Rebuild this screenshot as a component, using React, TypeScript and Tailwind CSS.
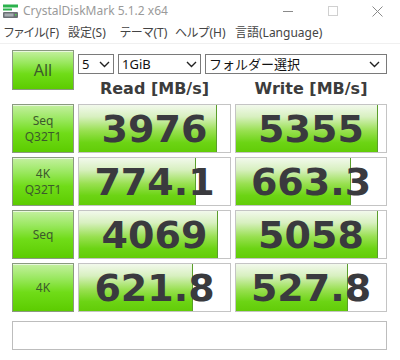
import React from "react";

const rows = [
  { l1: "Seq", l2: "Q32T1", r: "3976", rw: 138, w: "5355", ww: 142 },
  { l1: "4K", l2: "Q32T1", r: "774.1", rw: 117, w: "663.3", ww: 115 },
  { l1: "Seq", l2: "", r: "4069", rw: 139, w: "5058", ww: 142 },
  { l1: "4K", l2: "", r: "621.8", rw: 114, w: "527.8", ww: 112 },
];

function Chevron() {
  return (
    <svg width="11" height="7" viewBox="0 0 11 7" className="shrink-0">
      <path d="M1 1 L5.5 5.5 L10 1" fill="none" stroke="#222" strokeWidth="1.4" />
    </svg>
  );
}

function ValueBox({ text, fill, width }: { text: string; fill: number; width: string }) {
  return (
    <div className={`relative h-full ${width} border border-[#c4c4c4] bg-white`}>
      <div
        className="absolute left-0 top-0 bottom-0 border-r border-[#5a9e2a] bg-[linear-gradient(to_bottom,#f2f9ec_0%,#d8f0c0_25%,#98e050_55%,#6cd414_80%,#62cc08_100%)]"
        style={{ width: fill }}
      />
      <div className="relative flex h-full items-center justify-center font-['DejaVu_Sans',sans-serif] text-[38px] font-bold leading-none text-[#3a3a3e]">
        {text}
      </div>
    </div>
  );
}

function GreenButton({ children }: { children: React.ReactNode }) {
  return (
    <div className="flex h-full w-[62px] flex-col items-center justify-center border border-[#8a9a80] bg-[linear-gradient(to_bottom,#c4f0a0_0%,#9ae860_30%,#70dc18_60%,#5ccc00_100%)] shadow-[inset_0_1px_0_#e8f8dc]">
      {children}
    </div>
  );
}

export default function App() {
  return (
    <div className="h-[360px] w-[400px] overflow-hidden bg-white font-['Noto_Sans','Noto_Sans_CJK_JP',sans-serif]">
      {/* title bar */}
      <div className="flex h-[22px] items-center">
        <svg width="15" height="15" viewBox="0 0 15 15" className="ml-[3px] mt-[1px]">
          <rect x="0" y="0.5" width="15" height="3" fill="#2bb24c" />
          <rect x="0" y="4.5" width="9" height="2" fill="#2bb24c" />
          <rect x="0" y="8" width="15" height="6" rx="1" fill="#6b7075" />
          <rect x="1.5" y="9.5" width="9" height="3" fill="#a7adb2" />
          <rect x="12" y="10" width="1.5" height="1.5" fill="#4fd14f" />
        </svg>
        <span className="ml-[5px] text-[12px] leading-none text-[#9a9a9a]">CrystalDiskMark 5.1.2 x64</span>
        <div className="ml-auto flex h-full items-center">
          <div className="flex w-[45px] justify-center">
            <div className="h-px w-[10px] bg-[#8a8a8a]" />
          </div>
          <div className="flex w-[45px] justify-center">
            <div className="h-[10px] w-[10px] border border-[#d0d0d0]" />
          </div>
          <div className="flex w-[45px] justify-center">
            <svg width="11" height="11" viewBox="0 0 11 11">
              <path d="M0.5 0.5 L10.5 10.5 M10.5 0.5 L0.5 10.5" stroke="#8a8a8a" strokeWidth="1" />
            </svg>
          </div>
        </div>
      </div>
      {/* menu */}
      <div className="flex h-[22px] items-center whitespace-nowrap border-b border-[#f0f0f0] text-[12px] leading-none text-[#444] [font-feature-settings:'palt']">
        <span className="ml-[4px] w-[64px] shrink-0">ファイル(F)</span>
        <span className="w-[52px] shrink-0">設定(S)</span>
        <span className="w-[55px] shrink-0">テーマ(T)</span>
        <span className="w-[60px] shrink-0">ヘルプ(H)</span>
        <span className="shrink-0">言語(Language)</span>
      </div>

      <div className="pl-[12px] pt-[6px]">
        {/* top section */}
        <div className="flex h-[54px] gap-[4px]">
          <div className="h-[40px]">
            <GreenButton>
              <span className="text-[16px] leading-none text-[#3c5a2c]">All</span>
            </GreenButton>
          </div>
          <div className="flex w-[309px] flex-col">
            <div className="mt-[4px] flex h-[20px] gap-[4px] text-[13px] text-[#111]">
              <div className="flex w-[36px] items-center justify-between border border-[#7a7a7a] px-[3px]">
                <span className="leading-none">5</span>
                <Chevron />
              </div>
              <div className="flex w-[83px] items-center justify-between border border-[#7a7a7a] px-[3px]">
                <span className="leading-none">1GiB</span>
                <Chevron />
              </div>
              <div className="flex w-[182px] items-center justify-between border border-[#7a7a7a] pl-[3px] pr-[6px]">
                <span className="leading-none">フォルダー選択</span>
                <Chevron />
              </div>
            </div>
            <div className="flex flex-1 items-center gap-[4px] font-['DejaVu_Sans',sans-serif] text-[16px] font-bold text-[#3c3c3c]">
              <div className="w-[153px] text-center">Read [MB/s]</div>
              <div className="w-[152px] text-center">Write [MB/s]</div>
            </div>
          </div>
        </div>

        {/* rows */}
        <div className="flex flex-col gap-[4px]">
          {rows.map((r, i) => (
            <div key={i} className="flex h-[49px] gap-[4px]">
              <GreenButton>
                <span className="text-[12px] leading-[16px] text-[#3c5a2c]">{r.l1}</span>
                {r.l2 && <span className="text-[12px] leading-[16px] text-[#3c5a2c]">{r.l2}</span>}
              </GreenButton>
              <ValueBox text={r.r} fill={r.rw} width="w-[153px]" />
              <ValueBox text={r.w} fill={r.ww} width="w-[152px]" />
            </div>
          ))}
        </div>

        {/* status */}
        <div className="mt-[9px] h-[29px] w-[375px] border border-[#bdbdbd] bg-white" />
      </div>
    </div>
  );
}
